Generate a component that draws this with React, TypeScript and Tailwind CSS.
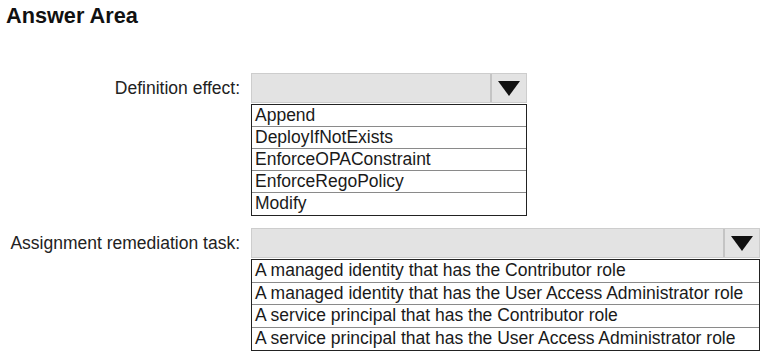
const effects = ["Append", "DeployIfNotExists", "EnforceOPAConstraint", "EnforceRegoPolicy", "Modify"];

const tasks = [
  "A managed identity that has the Contributor role",
  "A managed identity that has the User Access Administrator role",
  "A service principal that has the Contributor role",
  "A service principal that has the User Access Administrator role",
];

function Arrow() {
  return (
    <svg width="22" height="15" viewBox="0 0 22 15">
      <polygon points="0,0 22,0 11,15" fill="#111" />
    </svg>
  );
}

interface DropdownProps {
  label: string;
  options: string[];
  width: string;
  rowHeight: string;
}

function Dropdown({ label, options, width, rowHeight }: DropdownProps) {
  return (
    <div className="flex items-start">
      <div className="w-[241px] h-[30px] pr-[1px] flex items-center justify-end text-[17.5px] text-[#222] whitespace-nowrap">
        {label}
      </div>
      <div className={`ml-[10px] ${width}`}>
        <div className="h-[30px] flex bg-[#e3e3e3] border border-[#cdcdcd]">
          <div className="flex-1" />
          <div className="w-[36px] border-l-2 border-[#c4c4c4] flex items-center justify-center">
            <Arrow />
          </div>
        </div>
        <div className="mt-[1px] border border-[#222] bg-white">
          {options.map((opt, i) => (
            <div
              key={opt}
              className={`${rowHeight} px-[3px] flex items-center text-[17.5px] text-[#1a1a1a] leading-none whitespace-nowrap ${
                i < options.length - 1 ? "border-b border-[#8a8a8a]" : ""
              }`}
            >
              {opt}
            </div>
          ))}
        </div>
      </div>
    </div>
  );
}

export default function App() {
  return (
    <div className="w-[765px] h-[357px] bg-white font-['Liberation_Sans',Arial,sans-serif] overflow-hidden">
      <h1 className="pl-[6px] pt-[4px] text-[21.7px] font-bold text-[#111] leading-[24px]">Answer Area</h1>
      <div className="mt-[45px]">
        <Dropdown label="Definition effect:" options={effects} width="w-[276px]" rowHeight="h-[22px]" />
      </div>
      <div className="mt-[12px]">
        <Dropdown label="Assignment remediation task:" options={tasks} width="w-[509px]" rowHeight="h-[22.5px]" />
      </div>
    </div>
  );
}
